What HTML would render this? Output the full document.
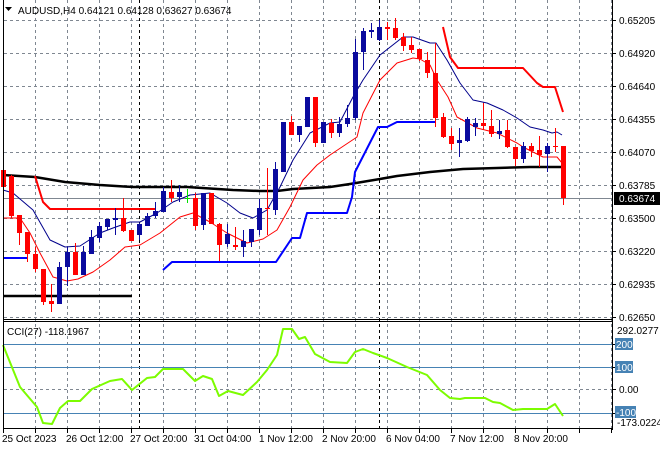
<!DOCTYPE html>
<html><head><meta charset="utf-8"><style>
html,body{margin:0;padding:0;background:#fff;width:660px;height:450px;overflow:hidden}
svg{display:block}
text{font-family:"Liberation Sans",sans-serif;font-size:10px;fill:#000}
</style></head><body>
<svg id="s" width="660" height="450" xmlns="http://www.w3.org/2000/svg">
<rect x="0" y="0" width="660" height="450" fill="#fff"/>
<g id="grid" stroke="#7f8791" stroke-width="1" stroke-dasharray="3,3" fill="none"></g>
<g id="chart"></g>
<line x1="3.5" y1="0" x2="3.5" y2="430" stroke="#000"/>
<line x1="612.5" y1="0" x2="612.5" y2="430" stroke="#000"/>
<line x1="3" y1="319.5" x2="613" y2="319.5" stroke="#000"/>
<line x1="3" y1="321.5" x2="613" y2="321.5" stroke="#000"/>
<line x1="3" y1="428.5" x2="613" y2="428.5" stroke="#000"/>
<polygon points="5,7 12,7 8.5,11" fill="#000"/>
<text x="18" y="14">AUDUSD,H4  0.64121 0.64128 0.63627 0.63674</text>
<text x="7" y="335">CCI(27) -118.1967</text>
<g id="axis">
<text x="619" y="24">0.65205</text>
<text x="619" y="57">0.64920</text>
<text x="619" y="90">0.64640</text>
<text x="619" y="123">0.64355</text>
<text x="619" y="156">0.64070</text>
<text x="619" y="189">0.63785</text>
<rect x="614" y="192" width="46" height="13" fill="#000"/>
<text x="619" y="202" style="fill:#fff">0.63674</text>
<text x="619" y="222">0.63500</text>
<text x="619" y="255">0.63220</text>
<text x="619" y="288">0.62935</text>
<text x="619" y="321">0.62650</text>
<text x="617" y="334">292.0277</text>
<rect x="615" y="338" width="18" height="12" fill="#4682b4"/>
<text x="616" y="348" style="fill:#fff">200</text>
<rect x="615" y="361" width="18" height="12" fill="#4682b4"/>
<text x="616" y="371" style="fill:#fff">100</text>
<text x="619" y="393">0.00</text>
<rect x="615" y="406" width="21" height="12" fill="#4682b4"/>
<text x="616" y="416" style="fill:#fff">-100</text>
<text x="617" y="426">-173.0224</text>
</g>
<text x="2" y="442">25 Oct 2023</text>
<text x="66" y="442">26 Oct 12:00</text>
<text x="130" y="442">27 Oct 20:00</text>
<text x="194" y="442">31 Oct 04:00</text>
<text x="259" y="442">1 Nov 12:00</text>
<text x="322" y="442">2 Nov 20:00</text>
<text x="386" y="442">6 Nov 04:00</text>
<text x="450" y="442">7 Nov 12:00</text>
<text x="514" y="442">8 Nov 20:00</text>
</svg>
<script>
var NS="http://www.w3.org/2000/svg";
function el(p,t,a){var e=document.createElementNS(NS,t);for(var k in a)e.setAttribute(k,a[k]);p.appendChild(e);return e;}
var g=document.getElementById("grid"),c=document.getElementById("chart"),s=document.getElementById("s");
for(var x=35;x<612;x+=32){el(g,"line",{x1:x+.5,y1:0,x2:x+.5,y2:428});}
[20,53,86,119,152,185,218,251,284,317,389].forEach(function(y){el(g,"line",{x1:4,y1:y+.5,x2:612,y2:y+.5});});
[139,379].forEach(function(x){el(c,"line",{x1:x+.5,y1:0,x2:x+.5,y2:428,stroke:"#000","stroke-dasharray":"3,3"});});
[344,367,413].forEach(function(y){el(c,"line",{x1:4,y1:y+.5,x2:612,y2:y+.5,stroke:"#4682b4"});});
el(c,"line",{x1:4,y1:198.5,x2:612,y2:198.5,stroke:"#7f8791"});
for(var x=3;x<612;x+=32)el(c,"line",{x1:x+.5,y1:429,x2:x+.5,y2:433,stroke:"#000"});
[20,53,86,119,152,185,218,251,284,317,344,367,389,413].forEach(function(y){el(c,"line",{x1:612,y1:y+.5,x2:616,y2:y+.5,stroke:"#000"});});
function pl(pts,col,w){el(c,"polyline",{points:pts,fill:"none",stroke:col,"stroke-width":w,"stroke-linejoin":"round"});}
pl("3,296 132,296","#000",2.5);
pl("3,175 35,177 65,182 100,185 133,187 187,187 233,190 260,191 277,191 293,189 330,187 350,184 380,179 397,176 430,172 463,169 497,168 530,167 562,167","#000",2.5);
pl("35,176 43,202 50,209 155,209","#f00",2);
pl("443,27 450,57 458,68 523,68 537,83 543,87 555,87 563,112","#f00",2);
pl("3,258 27,258","#00f",2);
pl("163,270 172,262 276,262 292,238 300,238 307,213 347,213 352,197 355,172 378,127 387,127 397,122 435,122","#00f",2);
pl("3,190 13,193 33,210 50,240 65,247 80,246 100,233 113,228 130,222 140,222 157,213 173,202 190,195 210,193 227,203 240,213 253,218 267,210 280,187 293,160 310,133 330,123 340,122 353,97 363,80 380,55 403,37 413,37 430,43 436,43 447,60 460,83 473,100 487,103 503,110 517,118 530,127 543,130 552,133 557,132 562,135","#00008b",1);
pl("3,218 20,218 30,233 40,253 53,277 67,281 78,279 93,272 110,260 125,247 140,245 160,233 180,217 193,213 210,222 227,233 247,243 263,239 277,230 290,207 303,180 317,165 330,155 357,137 363,113 380,80 397,63 413,58 420,59 430,65 437,80 448,97 457,117 477,128 497,133 517,143 523,147 543,157 557,157 562,163","#f00",1);
// candles: o,c,h,l in pixel y
var K=[[170,187,161,187],[176,216,175,218],[215,233,215,245],[232,254,232,262],[254,269,247,272],[269,302,269,305],[301,304,284,312],[304,267,262,304],[267,252,247,286],[252,275,243,275],[275,252,246,275],[254,237,230,254],[238,226,222,242],[227,219,219,230],[220,218,208,235],[218,231,198,232],[230,241,230,241],[235,224,223,240],[226,216,213,226],[216,211,202,218],[212,191,187,212],[192,198,180,202],[197,192,185,202],[198,198,189,203],[198,226,193,230],[225,193,193,230],[193,224,193,224],[224,245,223,261],[244,234,224,247],[245,247,227,250],[247,241,230,257],[242,229,229,247],[230,208,199,235],[208,209,168,235],[210,169,162,215],[172,122,122,172],[122,135,116,135],[135,126,126,142],[127,97,97,127],[97,143,97,147],[143,122,122,143],[123,133,119,138],[133,124,117,137],[124,118,105,127],[118,52,39,120],[52,31,28,70],[32,30,23,38],[40,27,20,41],[27,29,22,40],[28,38,18,40],[37,46,33,51],[45,50,37,53],[49,59,50,61],[60,73,52,78],[73,118,43,127],[117,137,113,138],[136,144,128,150],[143,140,128,157],[141,119,117,142],[127,123,118,136],[123,126,103,130],[126,134,110,137],[134,131,120,139],[130,147,120,148],[147,159,147,166],[159,146,142,163],[146,151,143,157],[150,155,136,167],[154,146,143,172],[146,147,128,152],[146,198,146,205]];
K.forEach(function(k,i){var x=3+8*i,up=k[1]<k[0],col=up?"#0a0a9e":"#f00";if(i==23)col="#00e000";
el(c,"line",{x1:x+.5,y1:k[2],x2:x+.5,y2:k[3],stroke:col});
var t=Math.min(k[0],k[1]),h=Math.max(1,Math.abs(k[0]-k[1]));
if(i==23)el(c,"line",{x1:x-2,y1:k[0]+.5,x2:x+3,y2:k[0]+.5,stroke:col});
else el(c,"rect",{x:x-2,y:t,width:5,height:h,fill:col});});
pl("3,345 20,387 37,407 43,423 52,424 60,408 68,401 80,401 92,389 110,381 122,379 132,390 147,378 155,377 163,369 183,369 195,381 203,376 212,379 219,396 228,391 243,395 257,382 267,370 277,355 283,329 292,329 299,339 305,337 315,354 330,362 347,363 355,352 363,349 373,353 387,358 407,367 427,375 440,390 450,398 460,399 465,398 485,398 493,402 500,403 513,410 523,409 547,409 555,404 563,416","#7cfc00",2);
</script>
</body></html>
